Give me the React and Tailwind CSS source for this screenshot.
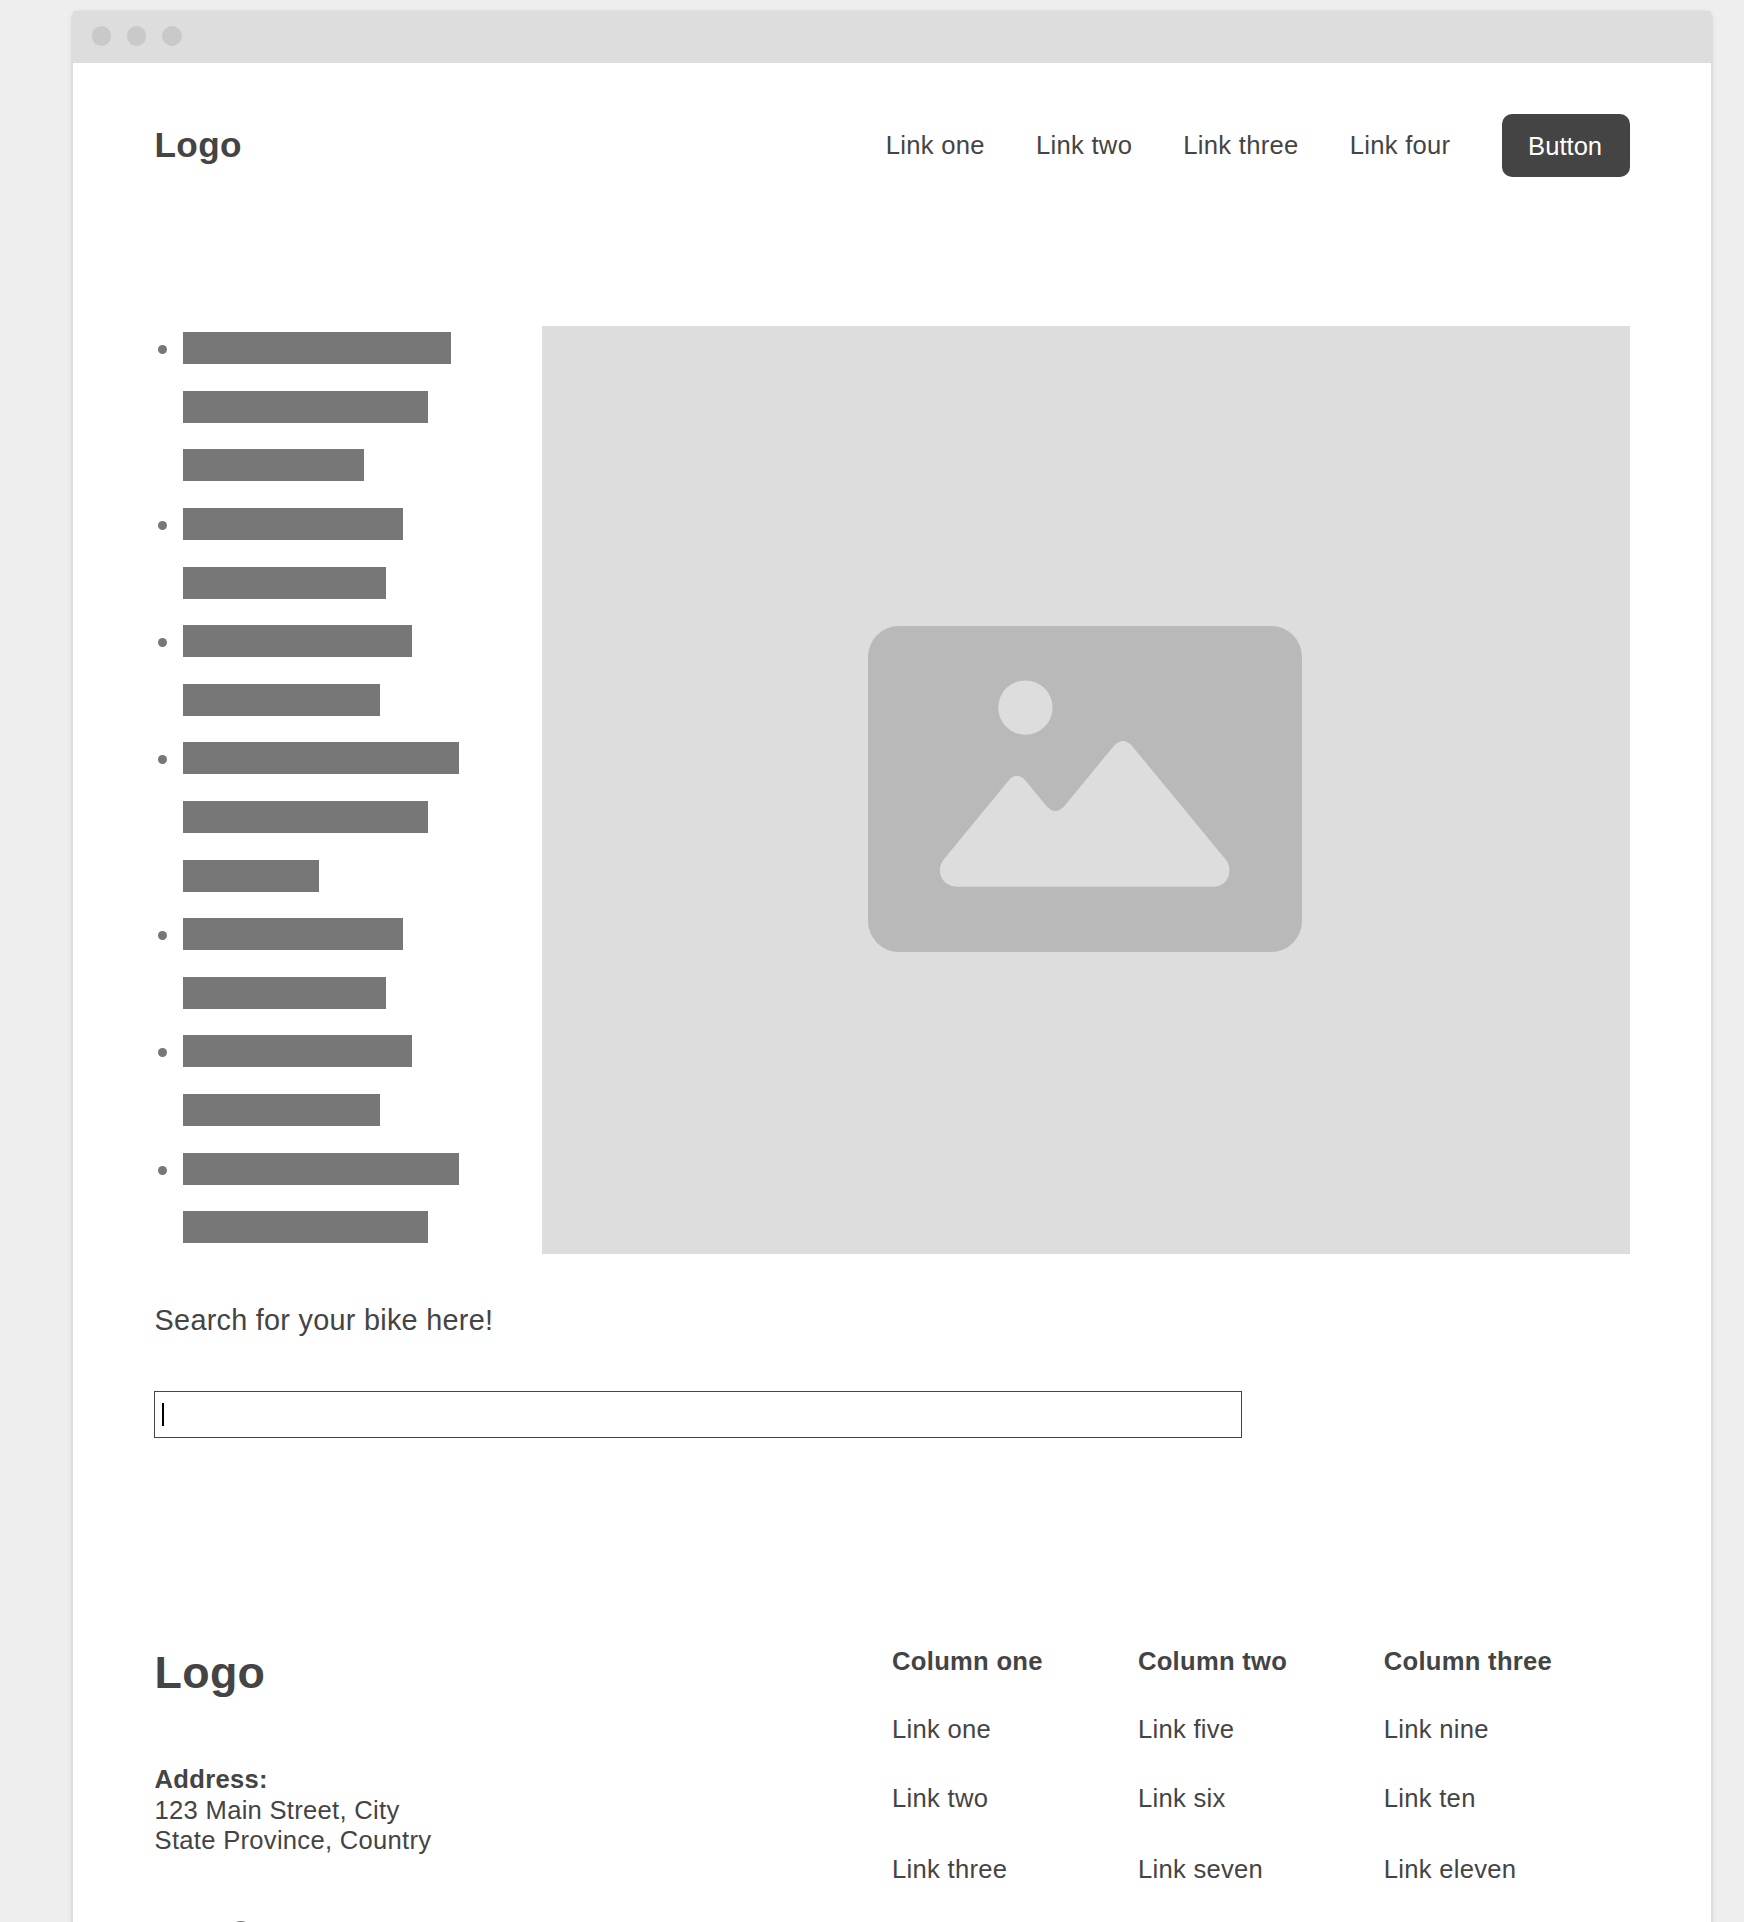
const listItems = [
  [268, 245, 181],
  [220, 203],
  [229, 197],
  [276, 245, 136],
  [220, 203],
  [229, 197],
  [276, 245],
];

const columns = [
  { title: "Column one", links: ["Link one", "Link two", "Link three"] },
  { title: "Column two", links: ["Link five", "Link six", "Link seven"] },
  { title: "Column three", links: ["Link nine", "Link ten", "Link eleven"] },
];

function TitleBar() {
  return (
    <div className="flex h-[52px] items-start gap-[15.7px] bg-[#ddd] pt-[15px] pl-[18.7px]">
      <span className="size-[19.5px] rounded-full bg-[#c9c9c9]" />
      <span className="size-[19.5px] rounded-full bg-[#c9c9c9]" />
      <span className="size-[19.5px] rounded-full bg-[#c9c9c9]" />
    </div>
  );
}

function Header() {
  return (
    <header className="flex h-[63px] items-center justify-between">
      <div className="-mt-0.5 text-[35.2px] leading-[42px] font-bold">Logo</div>
      <nav className="flex items-center gap-[51.2px]">
        <a>Link one</a>
        <a>Link two</a>
        <a>Link three</a>
        <a>Link four</a>
        <button className="h-[63px] w-32 rounded-[10px] bg-[#444] pt-px pr-px tracking-normal text-white">
          Button
        </button>
      </nav>
    </header>
  );
}

function BulletList() {
  return (
    <ul className="h-[928px] pt-[6.2px] pl-[3.4px]">
      {listItems.map((bars, i) => (
        <li key={i} className="flex gap-4">
          <span className="mt-[13px] size-[9px] shrink-0 rounded-full bg-[#777]" />
          <div>
            {bars.map((width, j) => (
              <div key={j} className="h-[58.6px]">
                <div className="h-8 bg-[#777]" style={{ width }} />
              </div>
            ))}
          </div>
        </li>
      ))}
    </ul>
  );
}

function ImagePlaceholder() {
  return (
    <div className="flex h-[928px] w-[1088px] items-center justify-center bg-[#ddd]">
      <svg className="mr-0.5 mb-0.5" width="434" height="326" viewBox="0 0 434 326">
        <rect width="434" height="326" rx="31" fill="#b9b9b9" />
        <circle cx="157.4" cy="81.6" r="27.2" fill="#ddd" />
        <path
          fill="#ddd"
          d="M75.3 234 L141 154 Q148.8 145.6 157 154 L179 180.8 Q187.3 189.3 195.8 180.8 L246.2 119.5 Q254.9 110.5 263.7 119.5 L358.5 234.5 C365.5 245 359.5 260.8 346 260.8 L89 260.8 C74.5 260.8 67 245.5 75.3 234 Z"
        />
      </svg>
    </div>
  );
}

function Footer() {
  return (
    <footer className="grid grid-cols-2">
      <div>
        <div className="-mt-px text-[44.8px] leading-[54px] font-bold">Logo</div>
        <address className="mt-[65px] leading-[30.7px] not-italic">
          <strong className="block">Address:</strong>
          123 Main Street, City
          <br />
          State Province, Country
        </address>
        <div className="mt-[65.3px] ml-[74.9px] size-6 rounded-full border-2 border-[#777]" />
      </div>
      <div className="grid grid-cols-3">
        {columns.map((column) => (
          <div key={column.title} className="flex flex-col">
            <strong className="leading-[31px]">{column.title}</strong>
            <div className="mt-[36.6px] flex flex-col leading-[31px]">
              {column.links.map((link) => (
                <a key={link} className="mb-[38.5px] last:mt-[1.6px]">
                  {link}
                </a>
              ))}
            </div>
          </div>
        ))}
      </div>
    </footer>
  );
}

export default function App() {
  return (
    <div className="h-[1922px] w-[1744px] overflow-hidden bg-[#eee] pt-2.5 pl-[71px] font-['Liberation_Sans',Arial,sans-serif] text-[25.6px] leading-[31px] tracking-[0.28px] text-[#444]">
      <div className="h-[2100px] w-[1642px] rounded-t-[9px] border-t border-[#e3e3e3] bg-[#ddd] px-0.5 shadow-[0_1px_6px_rgba(0,0,0,0.05)]">
        <TitleBar />
        <main className="h-[2040px] bg-white pt-[51px] pr-[81.4px] pl-[81.6px]">
          <Header />
          <section className="mt-[149px] flex justify-between">
            <BulletList />
            <ImagePlaceholder />
          </section>
          <section className="mt-[49px]">
            <p className="text-[28.8px] leading-[35px]">Search for your bike here!</p>
            <div className="mt-[53px] -ml-[0.6px] flex h-[47px] w-[1088px] items-center border border-[#444] pl-[7.4px]">
              <span className="h-[23px] w-0.5 bg-black" />
            </div>
          </section>
          <div className="mt-[208px]">
            <Footer />
          </div>
        </main>
      </div>
    </div>
  );
}
